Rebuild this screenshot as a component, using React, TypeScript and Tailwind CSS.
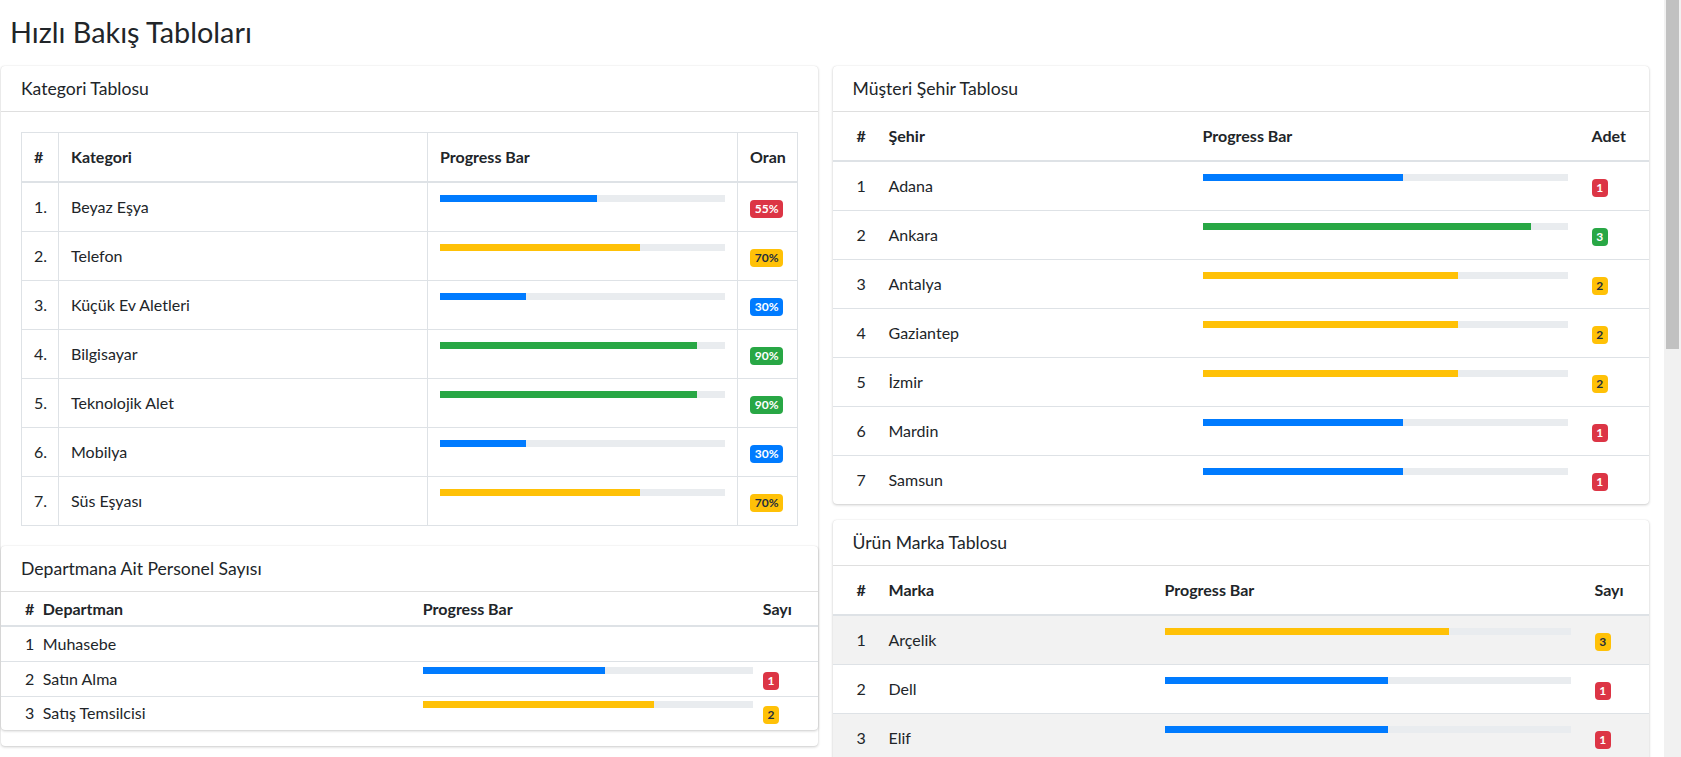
import React from "react";

type Tone = "blue" | "yellow" | "green" | "red";

const barColor: Record<Tone, string> = {
  blue: "bg-[#007bff]",
  yellow: "bg-[#ffc107]",
  green: "bg-[#28a745]",
  red: "bg-[#dc3545]",
};

const badgeColor: Record<Tone, string> = {
  blue: "bg-[#007bff] text-white",
  yellow: "bg-[#ffc107] text-[#1f2d3d]",
  green: "bg-[#28a745] text-white",
  red: "bg-[#dc3545] text-white",
};

function Progress({ pct, tone }: { pct: number; tone: Tone }) {
  return (
    <div className="h-[7px] w-full bg-[#e9ecef]">
      <div className={`h-full ${barColor[tone]}`} style={{ width: `${pct}%` }} />
    </div>
  );
}

function Badge({ text, tone }: { text: string; tone: Tone }) {
  return (
    <span
      className={`inline-block rounded-[4px] px-[4.8px] py-[3px] text-[12px] font-bold leading-none align-baseline ${badgeColor[tone]}`}
    >
      {text}
    </span>
  );
}

function Card({ title, children }: { title: string; children: React.ReactNode }) {
  return (
    <div className="mb-4 flex flex-col rounded-[4px] bg-white shadow-[0_0_1px_rgba(0,0,0,0.125),0_1px_3px_rgba(0,0,0,0.2)]">
      <div className="border-b border-[rgba(0,0,0,0.125)] px-5 py-3 text-[17.6px] leading-[1.2]">{title}</div>
      {children}
    </div>
  );
}

const kategoriler: { name: string; pct: number; tone: Tone }[] = [
  { name: "Beyaz Eşya", pct: 55, tone: "blue" },
  { name: "Telefon", pct: 70, tone: "yellow" },
  { name: "Küçük Ev Aletleri", pct: 30, tone: "blue" },
  { name: "Bilgisayar", pct: 90, tone: "green" },
  { name: "Teknolojik Alet", pct: 90, tone: "green" },
  { name: "Mobilya", pct: 30, tone: "blue" },
  { name: "Süs Eşyası", pct: 70, tone: "yellow" },
];

const kategoriBadge: Record<number, Tone> = { 55: "red", 70: "yellow", 30: "blue", 90: "green" };

const departmanlar: { name: string; count?: number; pct?: number; tone?: Tone }[] = [
  { name: "Muhasebe" },
  { name: "Satın Alma", count: 1, pct: 55, tone: "blue" },
  { name: "Satış Temsilcisi", count: 2, pct: 70, tone: "yellow" },
];

const sehirler: { name: string; count: number; pct: number; tone: Tone }[] = [
  { name: "Adana", count: 1, pct: 55, tone: "blue" },
  { name: "Ankara", count: 3, pct: 90, tone: "green" },
  { name: "Antalya", count: 2, pct: 70, tone: "yellow" },
  { name: "Gaziantep", count: 2, pct: 70, tone: "yellow" },
  { name: "İzmir", count: 2, pct: 70, tone: "yellow" },
  { name: "Mardin", count: 1, pct: 55, tone: "blue" },
  { name: "Samsun", count: 1, pct: 55, tone: "blue" },
];

const markalar: { name: string; count: number; pct: number; tone: Tone }[] = [
  { name: "Arçelik", count: 3, pct: 70, tone: "yellow" },
  { name: "Dell", count: 1, pct: 55, tone: "blue" },
  { name: "Elif", count: 1, pct: 55, tone: "blue" },
];

const countBadge: Record<number, Tone> = { 1: "red", 2: "yellow", 3: "green" };

function CountTable({
  label,
  lastLabel,
  rows,
  widths,
  striped,
  badgeTone,
}: {
  label: string;
  lastLabel: string;
  rows: { name: string; count: number; pct: number; tone: Tone }[];
  widths: [string, string, string];
  striped?: boolean;
  badgeTone?: (r: { count: number; tone: Tone }) => Tone;
}) {
  return (
    <table className="w-full table-fixed border-collapse">
      <thead>
        <tr className="border-b-2 border-[#dee2e6]">
          <th className={`${widths[0]} py-3 pr-3 pl-6 text-left font-bold`}>#</th>
          <th className={`${widths[1]} p-3 text-left font-bold`}>{label}</th>
          <th className={`${widths[2]} p-3 text-left font-bold`}>Progress Bar</th>
          <th className="py-3 pr-6 pl-3 text-left font-bold">{lastLabel}</th>
        </tr>
      </thead>
      <tbody>
        {rows.map((r, i) => (
          <tr
            key={r.name}
            className={`border-t border-[#dee2e6] ${striped && i % 2 === 0 ? "bg-[#f2f2f2]" : ""}`}
          >
            <td className="py-3 pr-3 pl-6 align-top">{i + 1}</td>
            <td className="p-3 align-top">{r.name}</td>
            <td className="p-3 align-top">
              <Progress pct={r.pct} tone={r.tone} />
            </td>
            <td className="py-3 pr-6 pl-3 align-top">
              <Badge text={String(r.count)} tone={badgeTone ? badgeTone(r) : countBadge[r.count]} />
            </td>
          </tr>
        ))}
      </tbody>
    </table>
  );
}

export default function App() {
  return (
    <div className="flex min-h-[1642px] bg-white text-[16px] leading-6 text-[#212529] font-['Lato',sans-serif]">
      <main className="flex-1">
        <div className="px-[10px] pt-[15px] pb-[16px]">
          <h1 className="text-[28.8px] leading-[1.2] font-normal">Hızlı Bakış Tabloları</h1>
        </div>

        <div className="flex items-start gap-[15px] pl-px pr-[15px]">
          {/* Left column */}
          <div className="flex-1">
            <Card title="Kategori Tablosu">
              <div className="p-5">
                <table className="w-full table-fixed border-collapse border border-[#dee2e6]">
                  <thead>
                    <tr>
                      <th className="w-[37px] border border-b-2 border-[#dee2e6] p-3 text-left font-bold">#</th>
                      <th className="w-[369px] border border-b-2 border-[#dee2e6] p-3 text-left font-bold">Kategori</th>
                      <th className="w-[310px] border border-b-2 border-[#dee2e6] p-3 text-left font-bold">Progress Bar</th>
                      <th className="border border-b-2 border-[#dee2e6] p-3 text-left font-bold">Oran</th>
                    </tr>
                  </thead>
                  <tbody>
                    {kategoriler.map((k, i) => (
                      <tr key={k.name}>
                        <td className="border border-[#dee2e6] p-3 align-top">{i + 1}.</td>
                        <td className="border border-[#dee2e6] p-3 align-top">{k.name}</td>
                        <td className="border border-[#dee2e6] p-3 align-top">
                          <Progress pct={k.pct} tone={k.tone} />
                        </td>
                        <td className="border border-[#dee2e6] p-3 align-top">
                          <Badge text={`${k.pct}%`} tone={kategoriBadge[k.pct]} />
                        </td>
                      </tr>
                    ))}
                  </tbody>
                </table>
              </div>

              <Card title="Departmana Ait Personel Sayısı">
                <table className="w-full table-fixed border-collapse">
                  <thead>
                    <tr className="border-b-2 border-[#dee2e6]">
                      <th className="w-[37px] py-[4.8px] pr-[4.8px] pl-6 text-left font-bold">#</th>
                      <th className="w-[380px] p-[4.8px] text-left font-bold">Departman</th>
                      <th className="w-[340px] p-[4.8px] text-left font-bold">Progress Bar</th>
                      <th className="py-[4.8px] pr-6 pl-[4.8px] text-left font-bold">Sayı</th>
                    </tr>
                  </thead>
                  <tbody>
                    {departmanlar.map((d, i) => (
                      <tr key={d.name} className="border-t border-[#dee2e6]">
                        <td className="py-[4.8px] pr-[4.8px] pl-6 align-top">{i + 1}</td>
                        <td className="p-[4.8px] align-top">{d.name}</td>
                        <td className="p-[4.8px] align-top">
                          {d.pct !== undefined && d.tone && <Progress pct={d.pct} tone={d.tone} />}
                        </td>
                        <td className="py-[4.8px] pr-6 pl-[4.8px] align-top">
                          {d.count !== undefined && <Badge text={String(d.count)} tone={countBadge[d.count]} />}
                        </td>
                      </tr>
                    ))}
                  </tbody>
                </table>
              </Card>
            </Card>
          </div>

          {/* Right column */}
          <div className="flex-1">
            <Card title="Müşteri Şehir Tablosu">
              <CountTable
                label="Şehir"
                lastLabel="Adet"
                rows={sehirler}
                widths={["w-[44px]", "w-[314px]", "w-[389px]"]}
              />
            </Card>

            <Card title="Ürün Marka Tablosu">
              <CountTable
                label="Marka"
                lastLabel="Sayı"
                rows={markalar}
                widths={["w-[44px]", "w-[276px]", "w-[430px]"]}
                striped
                badgeTone={(r) => (r.count === 3 ? "yellow" : "red")}
              />
            </Card>
          </div>
        </div>
      </main>

      {/* Page scrollbar */}
      <aside className="w-[17px] shrink-0 bg-[#f1f1f1] px-[2px]">
        <div className="h-[349px] bg-[#c1c1c1]" />
      </aside>
    </div>
  );
}
